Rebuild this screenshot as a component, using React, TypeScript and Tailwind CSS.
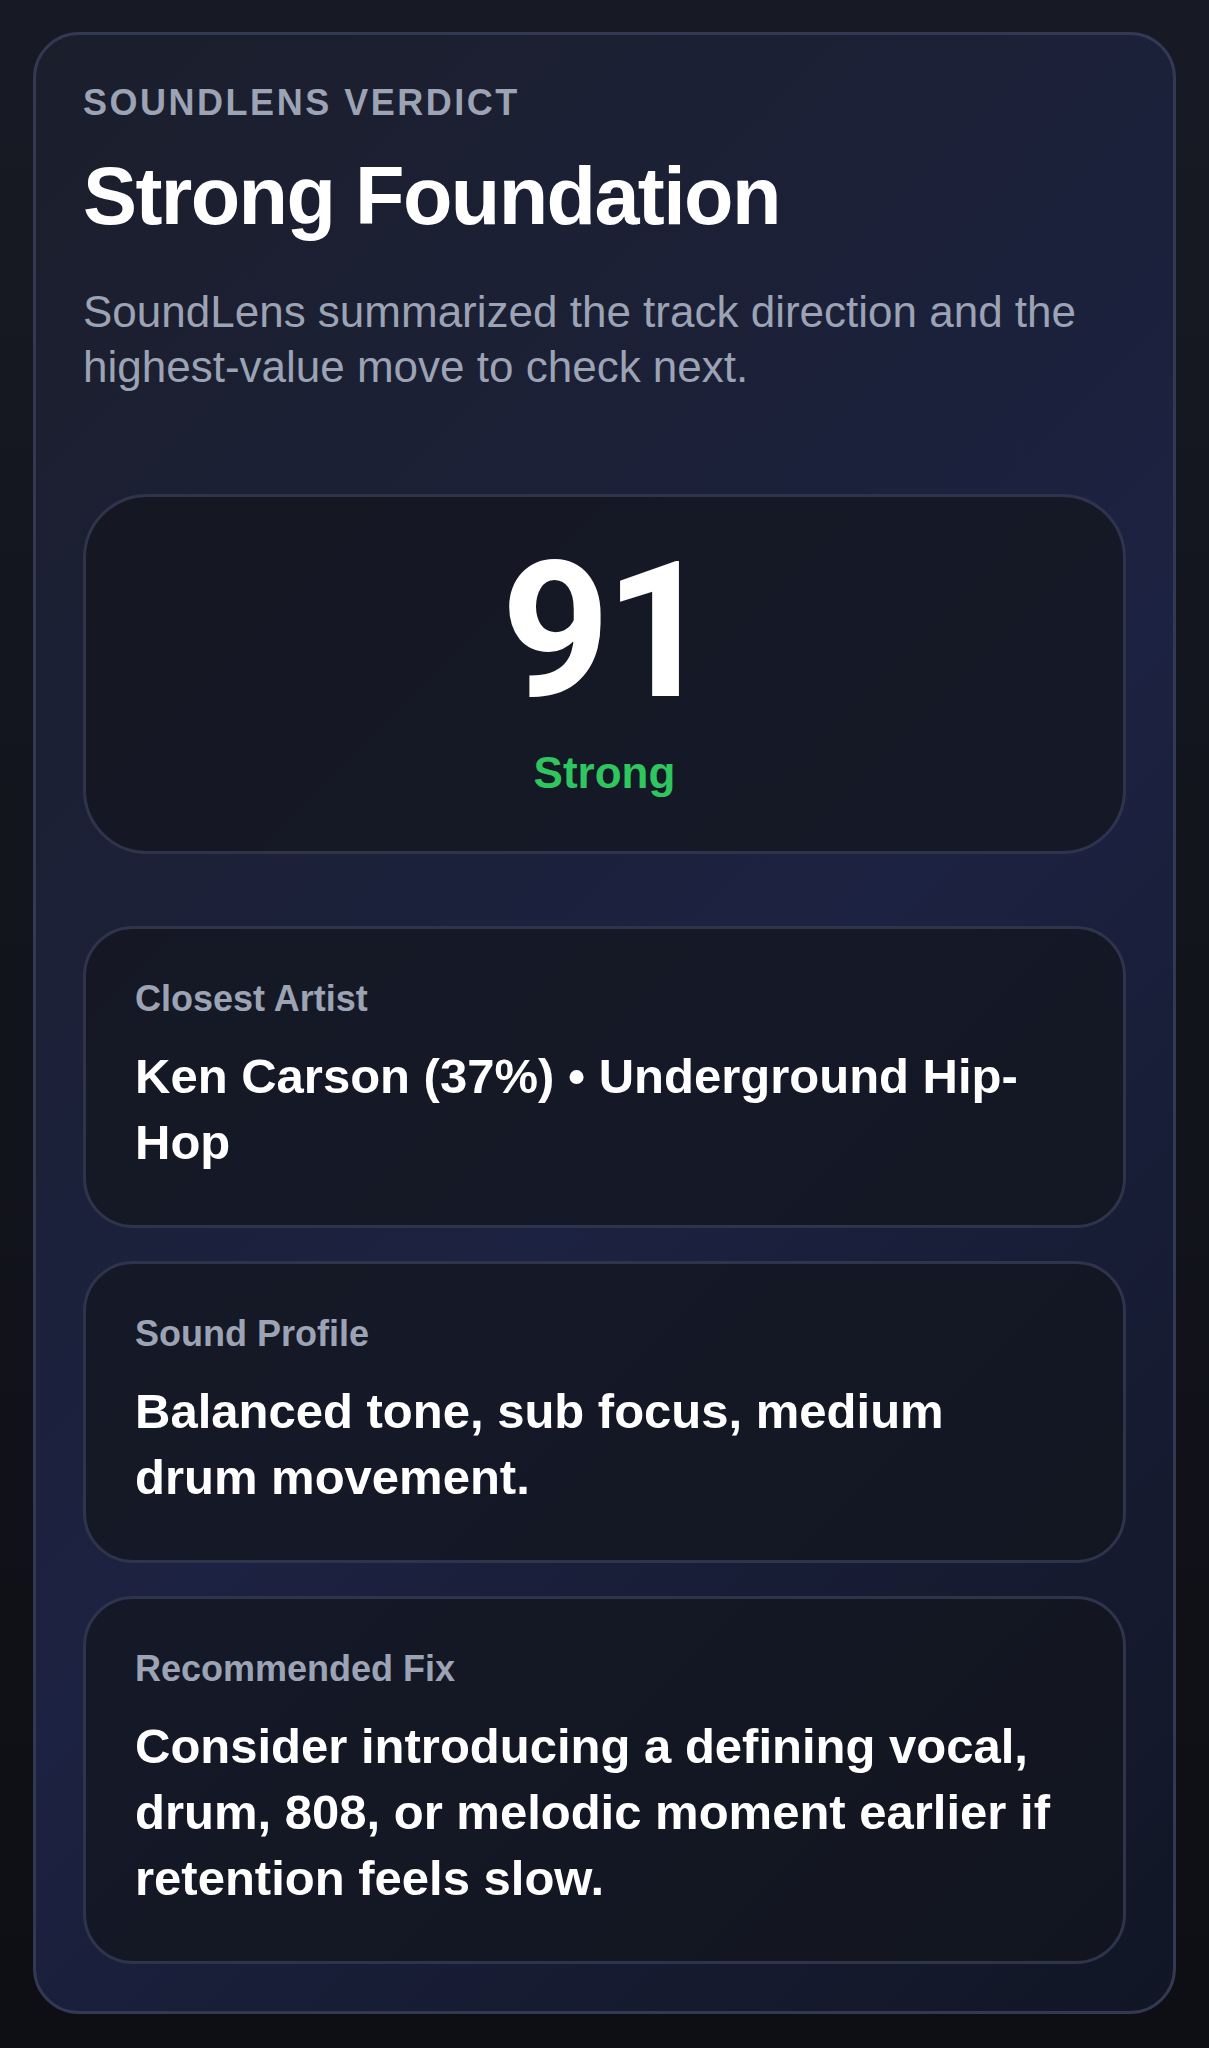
type Insight = {
  label: string;
  value: string;
};

const insights: Insight[] = [
  { label: 'Closest Artist', value: 'Ken Carson (37%) • Underground Hip-Hop' },
  { label: 'Sound Profile', value: 'Balanced tone, sub focus, medium drum movement.' },
  {
    label: 'Recommended Fix',
    value: 'Consider introducing a defining vocal, drum, 808, or melodic moment earlier if retention feels slow.',
  },
];

const ScoreCard = ({ score, rating }: { score: number; rating: string }) => (
  <div className="mt-[100px] rounded-[64px] border-3 border-[#2f344b] bg-[#12161d]/70 bg-clip-padding pt-12 pb-[50px] text-center font-bold">
    <div className="font-[Roboto,sans-serif] text-[190px] leading-[172px] tracking-[-0.03em] text-white">{score}</div>
    <div className="mt-[28px] text-[44px] leading-[56px] text-[#2fc55f]">{rating}</div>
  </div>
);

const InsightCard = ({ label, value }: Insight) => (
  <div className="rounded-[50px] border-3 border-[#2f344b] bg-[#12161d]/70 bg-clip-padding px-[49px] pt-12 pb-[50px] font-bold">
    <dt className="text-[36px] leading-[44px] text-[#9ca3b4]">{label}</dt>
    <dd className="mt-[22px] text-[49px] leading-[66px] text-white">{value}</dd>
  </div>
);

export default function App() {
  return (
    <main className="min-h-screen bg-linear-to-b from-[#171924] to-[#0e0f14] px-[33px] pt-8 pb-[34px] font-['Liberation_Sans',Arial,sans-serif]">
      <section className="rounded-[46px] border-3 border-[#333853] bg-linear-135 from-[#1b1e2b] via-[#1c2241] via-55% to-[#111625] p-[47px]">
        <p className="text-[36px] leading-[42px] font-bold tracking-[0.07em] text-[#9ca3b4] uppercase">
          SoundLens Verdict
        </p>
        <h1 className="mt-[26px] text-[81px] leading-[92px] font-bold tracking-[-0.02em] text-white">
          Strong Foundation
        </h1>
        <p className="mt-[42px] text-[44px] leading-[55px] text-[#9ca3b4]">
          SoundLens summarized the track direction and the highest-value move to check next.
        </p>
        <ScoreCard score={91} rating="Strong" />
        <dl className="mt-[72px] grid gap-[33px]">
          {insights.map((insight) => (
            <InsightCard key={insight.label} {...insight} />
          ))}
        </dl>
      </section>
    </main>
  );
}
